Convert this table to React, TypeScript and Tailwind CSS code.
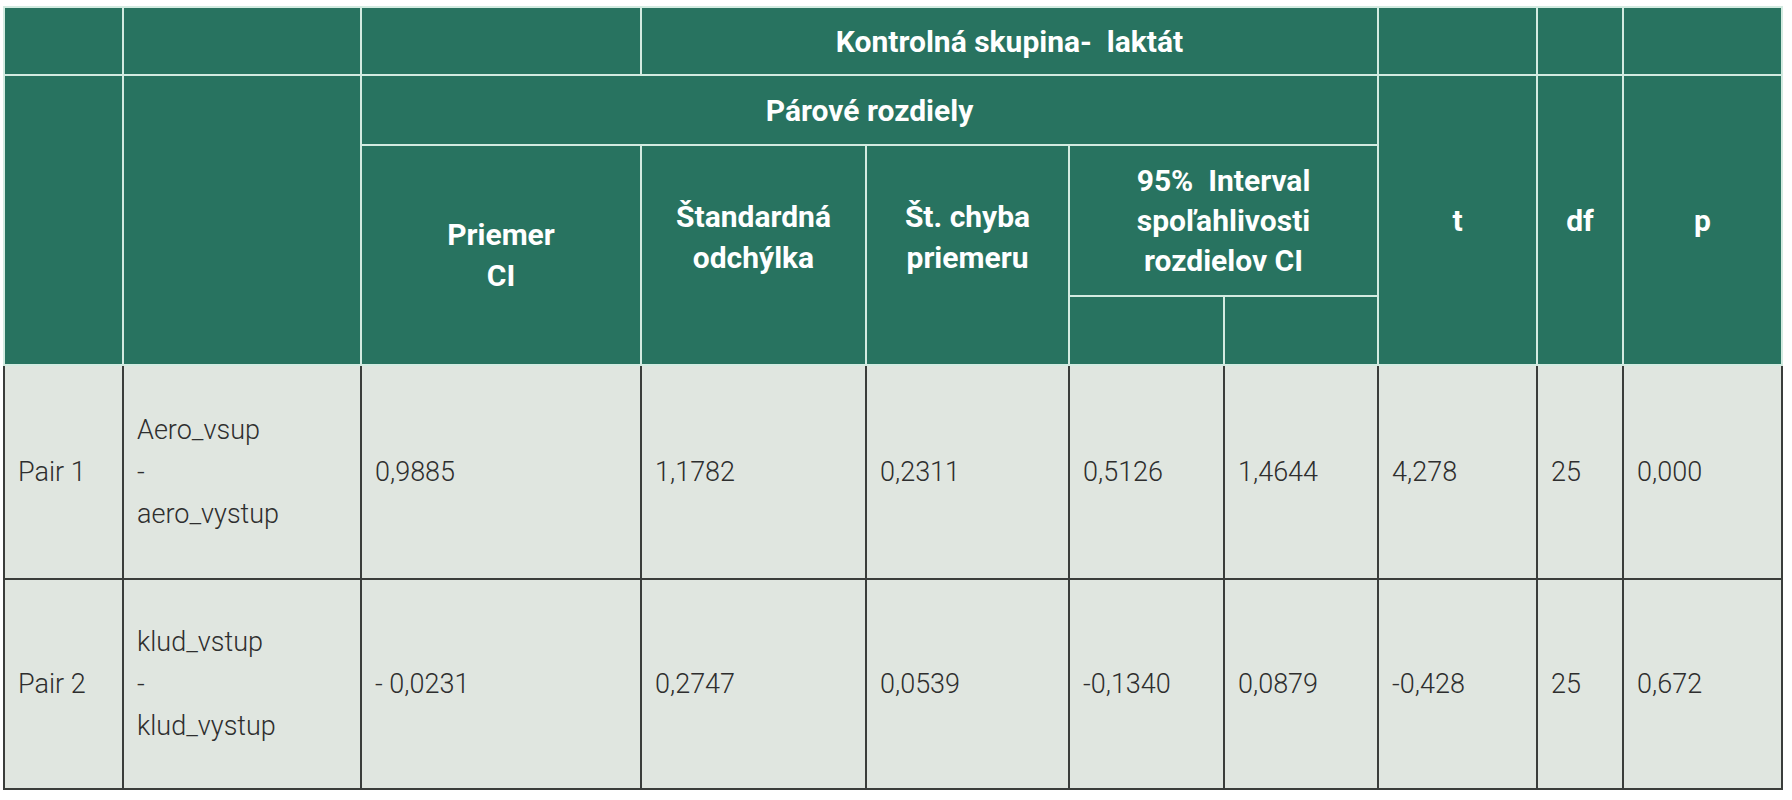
const HEAD = "bg-[#287360] text-white font-bold text-[30px] border-2 border-[#d3ebe1] text-center align-middle";
const CELL = "bg-[#e0e6e0] text-[#2e2e2e] font-light border-2 border-[#3a3d3b] px-[13px] text-left align-middle";

// column widths follow the printed table, left to right
const COLS = [119, 238, 280, 225, 203, 155, 154, 159, 86, 159];

const ROWS = [
  {
    pair: "Pair 1",
    vars: ["Aero_vsup", "-", "aero_vystup"],
    values: ["0,9885", "1,1782", "0,2311", "0,5126", "1,4644", "4,278", "25", "0,000"],
    h: "h-[214px]",
  },
  {
    pair: "Pair 2",
    vars: ["klud_vstup", "-", "klud_vystup"],
    values: ["- 0,0231", "0,2747", "0,0539", "-0,1340", "0,0879", "-0,428", "25", "0,672"],
    h: "h-[210px]",
  },
];

export default function App() {
  return (
    <div className="min-h-screen bg-white pl-[3px] pt-[6px]" style={{ fontFamily: "Roboto, 'Liberation Sans', sans-serif" }}>
      <table className="table-fixed border-collapse w-[1778px] text-[27px]">
        <colgroup>
          {COLS.map((w, i) => (
            <col key={i} style={{ width: w }} />
          ))}
        </colgroup>
        <thead className="leading-[41px]">
          <tr className="h-[68px]">
            <th className={HEAD} />
            <th className={HEAD} />
            <th className={HEAD} />
            <th className={HEAD} colSpan={4}>
              <span className="whitespace-pre">Kontrolná skupina-  laktát</span>
            </th>
            <th className={HEAD} />
            <th className={HEAD} />
            <th className={HEAD} />
          </tr>
          <tr className="h-[70px]">
            <th className={HEAD} rowSpan={3} />
            <th className={HEAD} rowSpan={3} />
            <th className={HEAD} colSpan={5}>
              Párové rozdiely
            </th>
            <th className={HEAD} rowSpan={3}>t</th>
            <th className={HEAD} rowSpan={3}>df</th>
            <th className={HEAD} rowSpan={3}>p</th>
          </tr>
          <tr className="h-[151px]">
            <th className={HEAD} rowSpan={2}>
              Priemer
              <br />
              CI
            </th>
            <th className={`${HEAD} pb-[36px]`} rowSpan={2}>
              Štandardná
              <br />
              odchýlka
            </th>
            <th className={`${HEAD} pb-[36px]`} rowSpan={2}>
              Št. chyba
              <br />
              priemeru
            </th>
            <th className={`${HEAD} leading-[40px]`} colSpan={2}>
              <span className="whitespace-pre">95%  Interval</span>
              <br />
              spoľahlivosti
              <br />
              rozdielov CI
            </th>
          </tr>
          <tr className="h-[69px]">
            <th className={HEAD} />
            <th className={HEAD} />
          </tr>
        </thead>
        <tbody className="leading-[42px]">
          {ROWS.map((r) => (
            <tr key={r.pair} className={r.h}>
              <td className={CELL}>{r.pair}</td>
              <td className={CELL}>
                {r.vars.map((v, i) => (
                  <div key={i}>{v}</div>
                ))}
              </td>
              {r.values.map((v, i) => (
                <td key={i} className={CELL}>
                  {v}
                </td>
              ))}
            </tr>
          ))}
        </tbody>
      </table>
    </div>
  );
}
